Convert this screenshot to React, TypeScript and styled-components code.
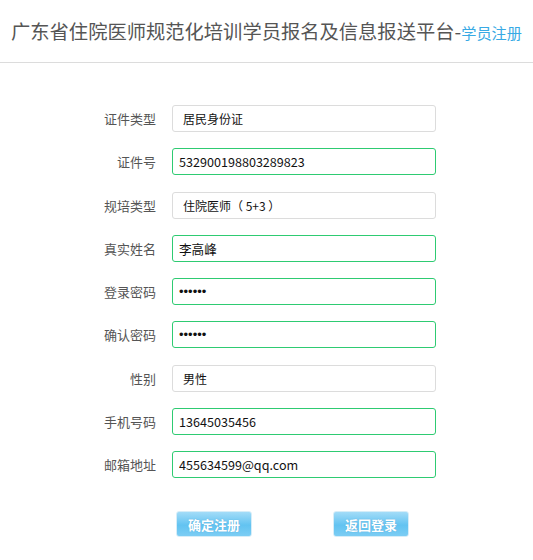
import { Fragment } from "react";
import styled, { createGlobalStyle } from "styled-components";

const GlobalStyle = createGlobalStyle`
	html, body {
		margin: 0;
		padding: 0;
		background: #fff;
		font-family: "Noto Sans CJK SC", "Noto Sans", sans-serif;
	}
`;

const Header = styled.header`
	height: 62px;
	border-bottom: 1px solid #dcdcdc;
	display: flex;
	align-items: center;
	justify-content: center;
`;

const Title = styled.h1`
	margin: 0;
	font-size: 19.3px;
	font-weight: normal;
	color: #555;
	white-space: nowrap;
	span {
		font-size: 15.2px;
		color: #38a9e4;
	}
`;

const Form = styled.form`
	margin-top: 42px;
	display: grid;
	grid-template-columns: 156px 264px;
	column-gap: 16px;
	row-gap: 16.25px;
`;

const Label = styled.label`
	display: flex;
	align-items: center;
	justify-content: flex-end;
	font-size: 13px;
	color: #555;
`;

const Field = styled.input<{ $locked?: boolean }>`
	box-sizing: border-box;
	width: 264px;
	height: 27px;
	margin: 0;
	padding: 0 0 0 ${(props) => (props.$locked ? "10px" : "6px")};
	border: 1px solid ${(props) => (props.$locked ? "#dcdcdc" : "#2ecb72")};
	border-radius: 3px;
	background: #fff;
	font-family: "Noto Sans CJK SC", sans-serif;
	font-size: ${(props) => (props.$locked ? "12px" : "12.6px")};
	color: #111;
	outline: none;
	&[type="password"] {
		font-family: "Liberation Sans", sans-serif;
		font-size: 13px;
		letter-spacing: 0;
	}
`;

const Buttons = styled.div`
	grid-column: 2;
	display: flex;
	gap: 81px;
	padding-left: 4px;
	margin-top: 17px;
`;

const Button = styled.button`
	width: 76px;
	height: 26px;
	padding: 0;
	border: 1px solid #d6edf8;
	border-radius: 3px;
	background: linear-gradient(#a3dcf8, #62c3f1 55%, #7ccdf4);
	color: #fff;
	font-family: "Noto Sans CJK SC", sans-serif;
	font-size: 13px;
	font-weight: bold;
	text-shadow: 0 0 1px rgba(60, 140, 190, 0.6);
	cursor: pointer;
`;

interface IRow {
	label: string;
	value: string;
	locked?: boolean;
	password?: boolean;
}

const rows: IRow[] = [
	{ label: "证件类型", value: "居民身份证", locked: true },
	{ label: "证件号", value: "532900198803289823" },
	{ label: "规培类型", value: "住院医师（ 5+3 ）", locked: true },
	{ label: "真实姓名", value: "李高峰" },
	{ label: "登录密码", value: "123456", password: true },
	{ label: "确认密码", value: "123456", password: true },
	{ label: "性别", value: "男性", locked: true },
	{ label: "手机号码", value: "13645035456" },
	{ label: "邮箱地址", value: "455634599@qq.com" },
];

function App() {
	return (
		<>
			<GlobalStyle />
			<Header>
				<Title>
					广东省住院医师规范化培训学员报名及信息报送平台-<span>学员注册</span>
				</Title>
			</Header>
			<Form onSubmit={(e) => e.preventDefault()}>
				{rows.map((row) => (
					<Fragment key={row.label}>
						<Label>{row.label}</Label>
						<Field
							$locked={row.locked}
							type={row.password ? "password" : "text"}
							value={row.value}
							readOnly
						/>
					</Fragment>
				))}
				<Buttons>
					<Button type="submit">确定注册</Button>
					<Button type="button">返回登录</Button>
				</Buttons>
			</Form>
		</>
	);
}

export default App;
